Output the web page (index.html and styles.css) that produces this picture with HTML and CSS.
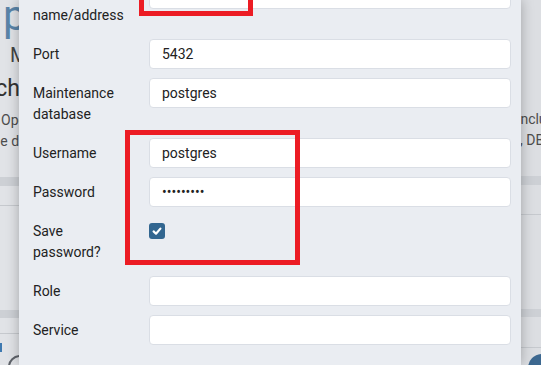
FILE: index.html
```html
<!DOCTYPE html>
<html>
<head>
    <title>Register - Server</title>
    <link rel="stylesheet" href="styles.css">
</head>
<body>
    <div class="screen">
        <!-- welcome page behind the modal -->
        <div class="backdrop">
            <div class="strip strip-left">
                <div class="logo">pgAdmin</div>
                <div class="tagline">Management Tools for PostgreSQL</div>
                <div class="heading">Feature rich</div>
                <p class="intro">Open Source administration</p>
                <p class="intro intro-cut">the database</p>
                <div class="band band-top"></div>
                <div class="rule rule-left-1"></div>
                <div class="band band-bottom"></div>
                <div class="rule rule-left-2"></div>
                <div class="link-bar"></div>
                <div class="icon-ring"></div>
            </div>
            <div class="strip-mid"></div>
            <div class="strip strip-right">
                <p class="intro intro-right">includes a graphical</p>
                <p class="intro intro-right2">, DBAs and system</p>
                <div class="band band-top"></div>
                <div class="rule rule-right-1"></div>
                <div class="band band-bottom-r"></div>
                <div class="rule rule-right-2"></div>
                <div class="icon-dot"></div>
            </div>
        </div>

        <div class="dialog">
            <form class="form">
                <div class="row">
                    <label>Host name/address</label>
                    <input type="text" value="">
                </div>
                <div class="row">
                    <label>Port</label>
                    <input type="text" value="5432">
                </div>
                <div class="row">
                    <label>Maintenance database</label>
                    <input type="text" value="postgres">
                </div>
                <div class="row">
                    <label>Username</label>
                    <input type="text" value="postgres">
                </div>
                <div class="row">
                    <label>Password</label>
                    <input type="password" value="postgres1">
                </div>
                <div class="row">
                    <label>Save password?</label>
                    <span class="check">
                        <svg width="16" height="16" viewBox="0 0 16 16">
                            <path d="M4.6 8.4 L7 10.7 L11.4 5.6" fill="none" stroke="#fff" stroke-width="2.2" stroke-linecap="round" stroke-linejoin="round"/>
                        </svg>
                    </span>
                </div>
                <div class="row">
                    <label>Role</label>
                    <input type="text" value="">
                </div>
                <div class="row">
                    <label>Service</label>
                    <input type="text" value="">
                </div>
            </form>
        </div>

        <div class="mark mark-host"></div>
        <div class="mark mark-cred"></div>
    </div>
</body>
</html>
```

FILE: styles.css
```css
body { margin: 0; font-family: Roboto, "Liberation Sans", sans-serif; }
.screen { position: relative; width: 541px; height: 365px; overflow: hidden; background: #dfe1e5; }

/* page behind the modal */
.backdrop { display: grid; grid-template-columns: 19px 1fr 20px; height: 100%; }
.strip { overflow: hidden; white-space: nowrap; }
.strip-left { background: #e1e3e7; }
.strip-right { background: #dcdee2; }
.logo { font-size: 42px; line-height: 46px; height: 46px; margin-top: -7px; padding-left: 3px; color: #5a84a8; }
.tagline { font-size: 20px; line-height: 20px; margin-top: 6px; padding-left: 10px; color: #444; }
.heading { font-size: 23px; line-height: 24px; margin-top: 12px; margin-left: -101px; color: #333; }
.intro { font-size: 14px; line-height: 21px; margin: 0; color: #4d4d4d; }
.strip-left .intro:first-of-type { margin-top: 9px; padding-left: 1px; }
.intro-cut { margin-left: -12px !important; }
.intro-right { margin-top: 109px !important; margin-left: -4px !important; }
.intro-right2 { margin-left: -1px !important; }
.band { height: 9px; background: #cdd0d5; }
.band-top { margin-top: 25px; }
.band-bottom { margin-top: 104px; height: 8px; }
.band-bottom-r { margin-top: 94px; height: 8px; }
.rule { height: 1px; background: #c6c9ce; }
.rule-left-1 { margin-top: 19px; }
.rule-left-2 { margin-top: 15px; }
.rule-right-1 { margin-top: 29px; }
.rule-right-2 { margin-top: 30px; }
.link-bar { width: 2px; height: 9px; margin-top: 9px; background: #3e79b0; }
.icon-ring { width: 20px; height: 20px; margin: 3px 0 0 8px; border: 2px solid #5f636a; border-radius: 50%; }
.icon-dot { width: 28px; height: 28px; margin: 6px 0 0 7px; border-radius: 50%; background: #3d6890; }

/* modal */
.dialog { position: absolute; left: 19px; top: 0; width: 502px; height: 365px; background: #eaedf2; box-shadow: 0 0 12px rgba(0, 0, 0, 0.28); }
.form { margin-top: -21px; padding: 0 10px 0 14px; display: flex; flex-direction: column; gap: 7.5px; }
.row { display: grid; grid-template-columns: 116px 1fr; align-items: start; }
.row label { font-size: 14px; line-height: 21px; padding: 5.25px 26px 5.25px 0; color: #222; }
.row input { height: 30px; box-sizing: border-box; border: 1px solid #dadee5; border-radius: 4px; background: #fff; padding: 0 12px; font-family: Roboto, "Liberation Sans", sans-serif; font-size: 14px; color: #222; outline: none; }
.check { width: 16px; height: 16px; margin-top: 7px; border-radius: 3px; background: #326690; display: block; }
.check svg { display: block; }

/* annotation boxes */
.mark { position: absolute; border: 5px solid #ec1c24; box-sizing: border-box; }
.mark-host { left: 139px; top: -10px; width: 114px; height: 26px; }
.mark-cred { left: 125px; top: 130px; width: 175px; height: 135px; }
```
